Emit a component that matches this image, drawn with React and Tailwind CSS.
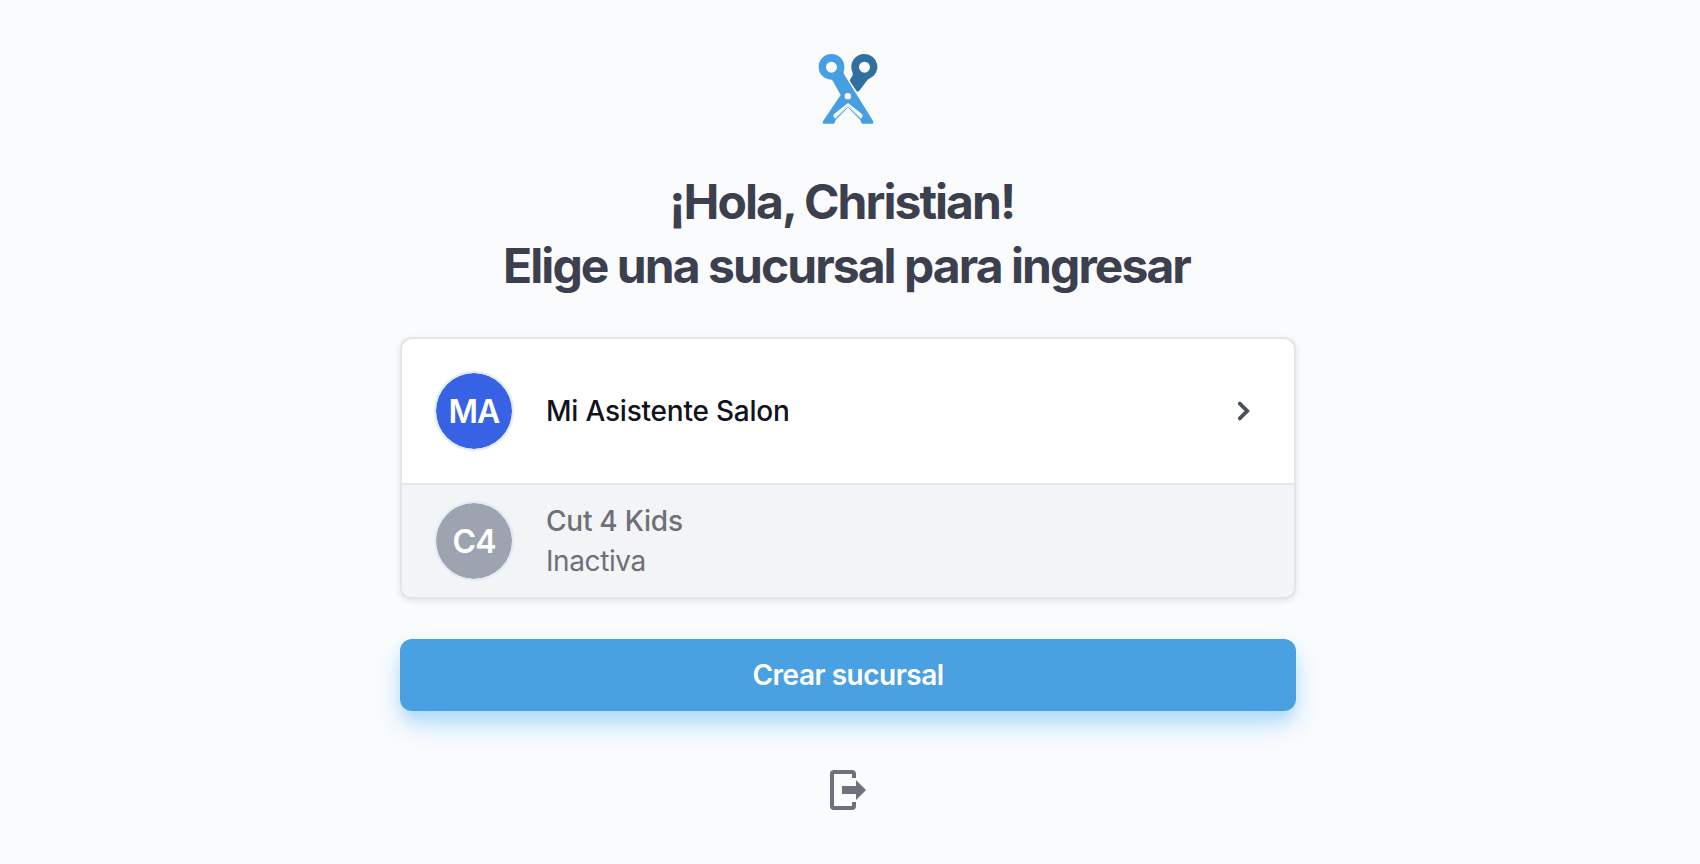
function ScissorsLogo() {
  return (
    <svg className="h-24 w-24" viewBox="0 0 288 288" aria-hidden="true">
      <path
        fill="#30709f"
        fillRule="evenodd"
        d="M193.500 42a38.500 38.500 0 0 1 14 74.500Q204 117 200 123L179 151q-5 7-10 1L151 125q-3-4 0-8l6-9q3-5 0-12A38.500 38.500 0 0 1 193.500 42ZM193.500 65a16.500 16.500 0 1 0 0 33a16.500 16.500 0 0 0 0-33Z"
      />
      <path
        fill="#489fe0"
        fillRule="evenodd"
        d="M94.500 42a38.500 38.500 0 0 1 37 50q-2 7 2 13L218 241q6 10-2 10H188q-4 0-5-4L181 237 144 194 107 237 105 247q-1 4-5 4H72q-7 0-2-9L122 165 99 124q-2-4-5-5A38.500 38.500 0 0 1 94.500 42ZM94.500 65a16.500 16.500 0 1 0 0 33a16.500 16.500 0 0 0 0-33ZM143.500 159a9.500 9.500 0 1 0 0 19a9.500 9.500 0 0 0 0-19Z"
      />
      <path
        fill="#fafbfd"
        d="M144 189L105 220Q100 224 100 228L105 236 144 194 183 236 188 228Q188 224 183 220Z"
      />
      <path fill="none" stroke="#489fe0" strokeWidth="3" d="M105 241L143 202M183 241L145 202" />
      <path fill="#fafbfd" d="M144 202L113 240 107 251H181L175 240Z" />
    </svg>
  );
}

function Avatar({ initials, className }) {
  return (
    <div className={`flex h-20 w-20 shrink-0 items-center justify-center rounded-full border-2 border-[#e3ebf9] bg-clip-padding pt-0.5 text-[32px] font-semibold tracking-[-0.900px] text-white ${className}`}>
      {initials}
    </div>
  );
}

export default function App() {
  return (
    <main className="h-[864px] overflow-hidden bg-[#fafbfd] font-['Inter',sans-serif]">
      <div className="mx-auto flex w-[1696px] -translate-x-0.5 flex-col items-center pt-10">
        <ScissorsLogo />

        <h1 className="mt-[34px] pr-[3px] text-center text-[48px] leading-[64px] font-bold tracking-[-1.950px] whitespace-pre text-[#3b3f4e]">
          {"¡Hola, Christian! "}
          <br />
          Elige una sucursal para ingresar
        </h1>

        <ul className="mt-[39px] w-[896px] overflow-hidden rounded-xl border-2 border-[#e4e5e8] bg-white shadow-[0_2px_6px_rgba(0,0,0,0.1)]">
          <li className="flex h-36 items-center gap-8 px-8">
            <Avatar initials="MA" className="bg-[#3662e3]" />
            <span className="flex-1 text-[28px] leading-10 font-medium tracking-[-0.220px] text-[#11131d]">Mi Asistente Salon</span>
            <svg className="-mr-0.5 h-10 w-10" viewBox="0 0 20 20" fill="none" aria-hidden="true">
              <path d="M7.900 6.300L11.600 10 7.900 13.700" stroke="#4b4f58" strokeWidth="1.900" strokeLinecap="round" />
            </svg>
          </li>
          <li className="flex h-[114px] items-center gap-8 border-t-2 border-[#e4e5e8] bg-[#f3f4f6] px-8">
            <Avatar initials="C4" className="bg-[#9da3af]" />
            <div className="text-[28px] leading-10 text-[#6d7078]">
              <p className="font-medium tracking-[-0.250px]">Cut 4 Kids</p>
              <p className="tracking-[-0.400px]">Inactiva</p>
            </div>
          </li>
        </ul>

        <button className="mt-10 h-[72px] w-[896px] rounded-xl bg-[#4aa1e2] text-[28px] font-semibold tracking-[-0.500px] text-white shadow-[0_14px_32px_-4px_#c3e4fa,0_12px_18px_-6px_#7cc8fa]">
          Crear sucursal
        </button>

        <button className="mt-[55px]" aria-label="Salir">
          <svg className="h-12 w-12" viewBox="0 0 48 48" aria-hidden="true">
            <path d="M30 12V8a2 2 0 0 0-2-2H10a2 2 0 0 0-2 2V40a2 2 0 0 0 2 2H28a2 2 0 0 0 2-2V36" fill="none" stroke="#6d717c" strokeWidth="4" />
            <path d="M18 20H32V14L42 24 32 34V28H18Z" fill="#6d717c" />
          </svg>
        </button>
      </div>
    </main>
  );
}
